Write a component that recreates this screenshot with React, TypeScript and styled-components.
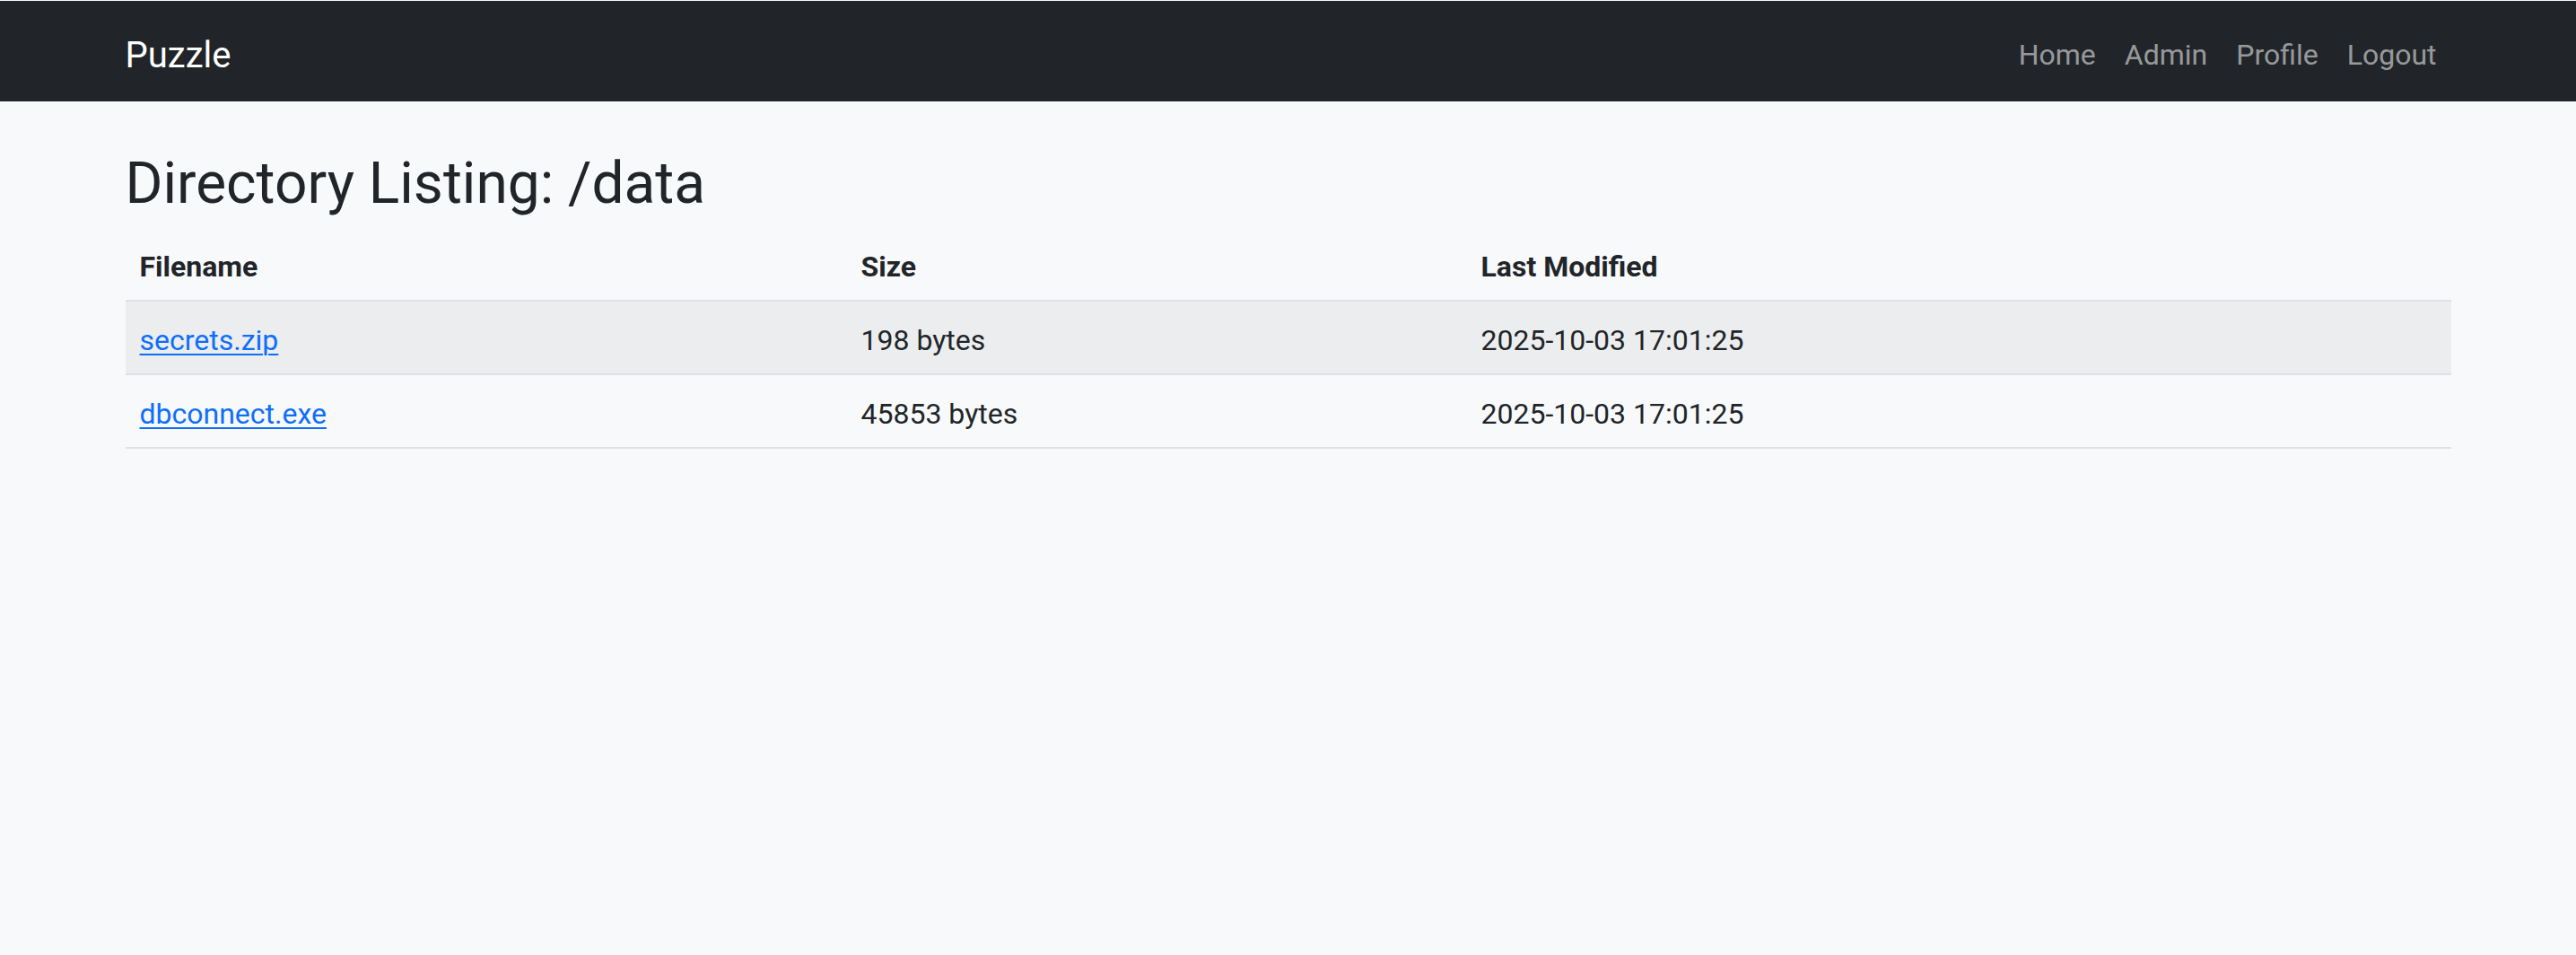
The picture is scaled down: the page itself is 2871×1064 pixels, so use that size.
import React from "react";
import styled, { createGlobalStyle } from "styled-components";

const GlobalStyle = createGlobalStyle`
  html, body {
    margin: 0;
    background: #f8f9fa;
  }
  body {
    padding-top: 1px;
    font-family: Roboto, "Open Sans", "Liberation Sans", sans-serif;
    font-size: 32px;
    line-height: 48px;
    color: #212529;
  }
  * { box-sizing: border-box; }
`;

const Navbar = styled.nav`
  background: #212529;
  padding: 16px 0;
`;

const Container = styled.div`
  max-width: 2640px;
  margin: 0 auto;
  padding: 0 24px;
`;

const NavInner = styled(Container)`
  display: flex;
  align-items: center;
  justify-content: space-between;
`;

const Brand = styled.a`
  font-size: 40px;
  line-height: 60px;
  padding: 15px 0 5px;
  color: #fff;
  text-decoration: none;
`;

const NavList = styled.ul`
  display: flex;
  list-style: none;
  margin: 0;
  padding: 0;
`;

const NavLink = styled.a`
  display: block;
  padding: 20px 16px 12px;
  font-size: 32px;
  line-height: 48px;
  color: rgba(255, 255, 255, 0.55);
  text-decoration: none;
`;

const Main = styled(Container)`
  margin-top: 48px;
`;

const Title = styled.h2`
  margin: 0 0 10px;
  padding-top: 6px;
  font-size: 64px;
  line-height: 76.8px;
  font-weight: 400;
  color: #212529;
`;

const Table = styled.table`
  width: 100%;
  table-layout: fixed;
  border-collapse: collapse;
`;

const HeadCell = styled.th`
  text-align: left;
  font-weight: 700;
  padding: 19px 16px 13px;
  border-bottom: 2px solid #dee2e6;
`;

const Row = styled.tr<{ $striped: boolean }>`
  background: ${(p) => (p.$striped ? "#ecedee" : "transparent")};
`;

const Cell = styled.td`
  padding: 19px 16px 13px;
  border-bottom: 2px solid #dee2e6;
  white-space: nowrap;
`;

const FileLink = styled.a`
  color: #0d6efd;
  text-decoration: underline;
  text-decoration-thickness: 2px;
  text-underline-offset: 4px;
`;

const files = [
  { name: "secrets.zip", size: "198 bytes", modified: "2025-10-03 17:01:25" },
  { name: "dbconnect.exe", size: "45853 bytes", modified: "2025-10-03 17:01:25" },
];

export default function App() {
  return (
    <>
      <GlobalStyle />
      <Navbar>
        <NavInner>
          <Brand href="#">Puzzle</Brand>
          <NavList>
            {["Home", "Admin", "Profile", "Logout"].map((l) => (
              <li key={l}>
                <NavLink href="#">{l}</NavLink>
              </li>
            ))}
          </NavList>
        </NavInner>
      </Navbar>
      <Main>
        <Title>Directory Listing: /data</Title>
        <Table>
          <colgroup>
            <col style={{ width: 804 }} />
            <col style={{ width: 691 }} />
            <col />
          </colgroup>
          <thead>
            <tr>
              <HeadCell>Filename</HeadCell>
              <HeadCell>Size</HeadCell>
              <HeadCell>Last Modified</HeadCell>
            </tr>
          </thead>
          <tbody>
            {files.map((f, i) => (
              <Row key={f.name} $striped={i % 2 === 0}>
                <Cell>
                  <FileLink href="#">{f.name}</FileLink>
                </Cell>
                <Cell>{f.size}</Cell>
                <Cell>{f.modified}</Cell>
              </Row>
            ))}
          </tbody>
        </Table>
      </Main>
    </>
  );
}
